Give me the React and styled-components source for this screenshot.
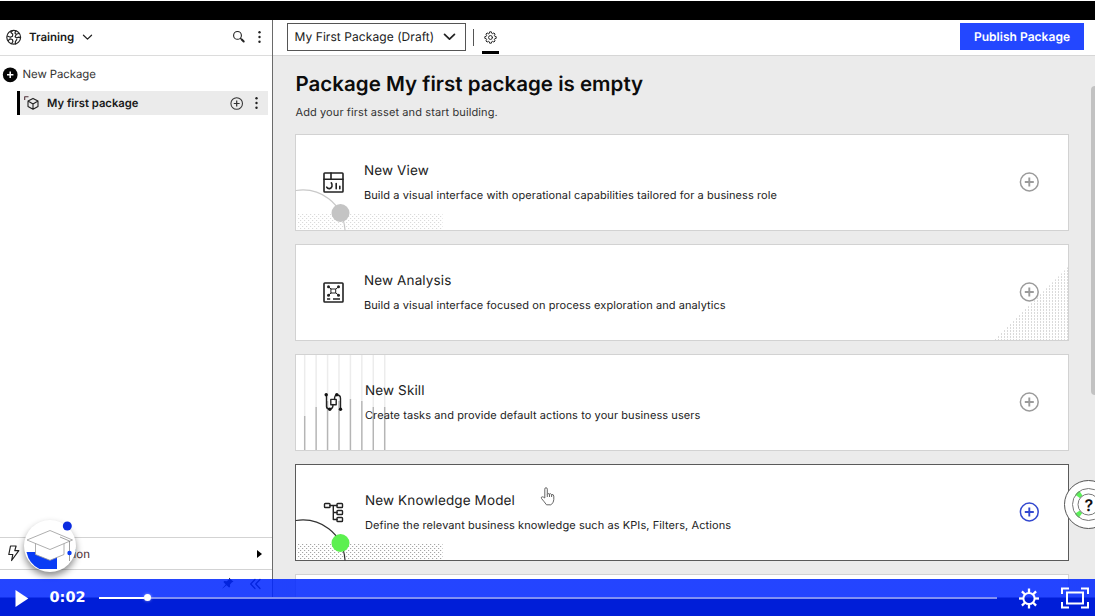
import React from "react";
import styled, { createGlobalStyle } from "styled-components";

const Global = createGlobalStyle`
  * { box-sizing: border-box; }
  body { margin: 0; background: #fff; overflow: hidden; }
  svg { display: block; flex: none; overflow: visible; }
`;

const Frame = styled.div`
  position: relative;
  width: 1095px;
  height: 616px;
  overflow: hidden;
  display: flex;
  flex-direction: column;
  background: #fff;
  color: #1a1a1a;
  font-family: Inter, "Liberation Sans", sans-serif;
  text-rendering: geometricPrecision;
`;
const Letterbox = styled.div`
  height: 19px;
  margin-top: 1px;
  background: #000;
  flex: none;
`;
const Body = styled.div`
  display: flex;
  flex: 1;
  min-height: 0;
`;
const Sidebar = styled.aside`
  width: 273px;
  flex: none;
  border-right: 1px solid #6a6a6a;
  display: flex;
  flex-direction: column;
`;
const SideHeader = styled.header`
  height: 36px;
  padding: 0 8px 1px 6px;
  border-bottom: 1px solid #dcdcdc;
  display: flex;
  align-items: center;
`;
const Label = styled.span`
  font-size: ${(p) => p.$size || 12}px;
  font-weight: ${(p) => p.$weight || 400};
  letter-spacing: ${(p) => p.$track || 0}px;
  color: ${(p) => p.$color || "#1a1a1a"};
  margin-left: ${(p) => p.$gap || 0}px;
  line-height: 16px;
  white-space: nowrap;
`;
const Spacer = styled.div`
  flex: ${(p) => (p.$width ? `0 0 ${p.$width}px` : "1")};
`;
const NewPackage = styled.div`
  height: 36px;
  padding: 0 0 0 3px;
  display: flex;
  align-items: center;
  gap: 4.5px;
`;
const PackageRow = styled.div`
  height: 24px;
  margin: -1px 4px 0 17px;
  padding: 0 7px 0 4px;
  border-left: 3px solid #000;
  background: #ebebeb;
  display: flex;
  align-items: center;
`;
const AutomationRow = styled.div`
  height: 33px;
  margin-top: auto;
  padding: 0 10px 0 7px;
  border: solid #d3d3d3;
  border-width: 1px 0;
  display: flex;
  align-items: center;
`;
const SideFooter = styled.div`
  height: 46px;
  padding: 7px 11px 0;
  display: flex;
  justify-content: flex-end;
  gap: 16px;
`;
const Main = styled.main`
  flex: 1;
  display: flex;
  flex-direction: column;
  background: #ebebeb;
`;
const Toolbar = styled.header`
  height: 36px;
  flex: none;
  padding: 3px 11px 0 14px;
  background: #fff;
  border-bottom: 1px solid #d6d6d6;
  display: flex;
  align-items: flex-start;
`;
const Select = styled.div`
  width: 179px;
  height: 28px;
  border: 1px solid #555;
  padding: 0 10px 0 6.5px;
  display: flex;
  align-items: center;
  justify-content: space-between;
`;
const Divider = styled.div`
  width: 1px;
  height: 17px;
  margin: 6px 8px 0 7px;
  background: #555;
`;
const SettingsTab = styled.div`
  width: 17px;
  height: 31px;
  padding: 8px 0 0 2px;
  border-bottom: 3px solid #000;
`;
const Publish = styled.button`
  width: 124px;
  height: 27px;
  border: 0;
  padding: 0;
  background: #2347ff;
  color: #fff;
  font: 600 12px/28px Inter, sans-serif;
  text-rendering: inherit;
  letter-spacing: 0.03px;
`;
const Content = styled.section`
  flex: 1;
  min-height: 0;
  overflow: hidden;
  display: flex;
  justify-content: space-between;
`;
const Column = styled.div`
  width: 796px;
  padding: 14px 0 0 22px;
`;
const Title = styled.h1`
  margin: 0 0 0 0.5px;
  font-size: 20.5px;
  line-height: 27px;
  font-weight: 600;
  letter-spacing: 0.02px;
  color: #0c0c0c;
`;
const Subtitle = styled.p`
  margin: 7px 0 14px 0.5px;
  font-size: 11px;
  line-height: 16px;
  letter-spacing: 0.1px;
  color: #333;
`;
const CardList = styled.div`
  display: flex;
  flex-direction: column;
  gap: 13px;
`;
const Card = styled.article`
  position: relative;
  width: 774px;
  height: 97px;
  background: #fff;
  border: 1px solid ${(p) => (p.$active ? "#5a5a5a" : "#d2d2d2")};
  padding: 0 29px 1px 27px;
  display: flex;
  align-items: center;
`;
const Ornament = styled.svg`
  position: absolute;
  left: 0;
  bottom: 0;
`;
const CardText = styled.div`
  position: relative;
  display: flex;
  flex-direction: column;
  gap: 8px;
  flex: 1;
  padding-top: 2px;
  margin-left: ${(p) => p.$indent}px;
`;
const CardTitle = styled.h2`
  margin: 0;
  font-size: 13.5px;
  line-height: 17px;
  font-weight: 400;
  letter-spacing: 0.12px;
  color: #222;
`;
const CardDesc = styled.p`
  margin: 0;
  font-size: 11px;
  line-height: 15px;
  letter-spacing: 0.08px;
  color: #222;
`;
const Scrollbar = styled.div`
  width: 4px;
  height: 309px;
  margin-top: 30px;
  background: #c2c2c2;
  border-radius: 4px 0 0 4px;
`;
const Player = styled.div`
  position: absolute;
  left: 0;
  top: 579px;
  width: 1095px;
  height: 37px;
  padding: 0 6px 0 15px;
  display: flex;
  align-items: center;
  background: linear-gradient(rgba(0, 38, 255, 0.86) 0 18px, rgba(0, 30, 216, 1) 19px);
`;
const Time = styled.span`
  width: 36px;
  margin: 2px 13px 0 20.5px;
  color: #fff;
  font: 700 14.5px/19px "DejaVu Sans", sans-serif;
  white-space: nowrap;
`;
const Track = styled.div`
  width: 898px;
  height: 2px;
  display: flex;
  align-items: center;
  background: #8291f2;
`;
const Played = styled.div`
  width: 45px;
  height: 2px;
  background: #fff;
`;
const Knob = styled.div`
  width: 7px;
  height: 7px;
  border-radius: 50%;
  background: #fff;
  box-shadow: 0 0 3px #fff8;
`;
const Controls = styled.div`
  display: flex;
  gap: 21px;
`;
const Academy = styled.div`
  position: absolute;
  left: 24px;
  top: 520px;
  width: 52px;
  height: 52px;
  border-radius: 50%;
  background: #fff;
  box-shadow: 0 4px 7px rgba(0, 0, 0, 0.45);
`;
const Help = styled.div`
  position: absolute;
  left: 1064px;
  top: 480px;
`;
const Cursor = styled.svg`
  position: absolute;
  left: 540px;
  top: 487px;
`;
const IconSlot = styled.div`
  position: relative;
`;

const stroke = (w = 1.2, color = "#222") => ({
  fill: "none",
  stroke: color,
  strokeWidth: w,
  strokeLinecap: "round",
  strokeLinejoin: "round",
});

const Globe = () => (
  <svg width="16" height="16" viewBox="0 0 16 16" {...stroke(1.2)}>
    <circle cx="7.7" cy="8.3" r="6.9" strokeWidth="1.2" />
    <path d="M6.300 1.900 4.900 3.600 6.700 5 6.500 7.200 4.400 8.300 1.300 7M2.300 11.500l1.700-1.600 2.400.6.500 2-1.200 2M9.700 2 8.900 4.100l1.300 1.300-1.100 2.300 1.400 1.200 2.400-.8 1.500.6M9.500 15l-.2-2.200 1.400-2.200M10.300 5.300l2.300-.8" />
  </svg>
);
const Chevron = ({ w = 9, weight = 1.4 }) => (
  <svg width={w} height={w / 2} viewBox="0 0 10 5" {...stroke(weight)}>
    <path d="M.5.3 5 4.6 9.5.3" />
  </svg>
);
const Magnifier = () => (
  <svg width="13" height="12" viewBox="0 0 13 12" {...stroke(1.1)}>
    <circle cx="5.5" cy="4.4" r="3.9" />
    <path d="m8.500 7.3 1.400 1.3" />
    <path d="m9.700 8.5 2 2" strokeWidth="2" />
  </svg>
);
const Dots = () => (
  <svg width="3" height="12" viewBox="0 0 3 12" fill="#222">
    <circle cx="1.5" cy="1.3" r="1.2" />
    <circle cx="1.5" cy="6" r="1.2" />
    <circle cx="1.5" cy="10.7" r="1.2" />
  </svg>
);
const PlusDisc = () => (
  <svg width="15" height="15" viewBox="0 0 15 15">
    <circle cx="7.2" cy="7.8" r="7.4" fill="#050505" />
    <path d="M7.200 4.600v6.400M4 7.800h6.400" stroke="#fff" strokeWidth="1.5" />
  </svg>
);
const PlusRing = ({ size = 20, color = "#9b9b9b", weight = 1.5 }) => (
  <svg width={size} height={size} viewBox="0 0 20 20" {...stroke(weight, color)}>
    <circle cx="10.3" cy="10" r="8.9" />
    <path d="M10.300 5.500v9M5.800 10h9" strokeWidth="1.9" strokeLinecap="butt" />
  </svg>
);
const Cube = () => (
  <svg width="16" height="16" viewBox="0 0 16 16" {...stroke(1.1)}>
    <path d="M.7 5V1.700h3.800" stroke="#503038" strokeLinecap="butt" />
    <path d="m9 3.400 5 2.700v5.300l-5 2.900-5-2.900V6.100zM4 6.100l5 2.800 5-2.800M9 8.900v5.400" />
  </svg>
);
const GearOutline = () => (
  <svg width="13" height="13" viewBox="0 0 24 24" {...stroke(1.8)}>
    <circle cx="12" cy="12" r="3.6" />
    <path d="m9.7 4.2.7-2.7h3.2l.7 2.7 1.6.7L18.3 3.500l2.2 2.200-1.400 2.400.7 1.600 2.700.7v3.200l-2.700.7-.7 1.600 1.400 2.400-2.200 2.200-2.400-1.400-1.600.7-.7 2.700h-3.200l-.7-2.700-1.600-.7-2.400 1.400-2.200-2.200 1.400-2.400-.7-1.600-2.700-.7v-3.200l2.700-.7.7-1.600-1.400-2.400 2.200-2.200 2.400 1.400z" />
  </svg>
);
const Bolt = () => (
  <svg width="13" height="17" viewBox="0 0 13 17" {...stroke(1.2)}>
    <path d="M3.500 1h5.600L7.800 5.700h4L4.600 15.500 5.800 9.500H1.800z" />
  </svg>
);
const Pin = () => (
  <svg width="12" height="12" viewBox="0 0 12 12" fill="#111">
    <path d="m7 .8 4.500 4-1.500.4-2 2.200.1 2.500-1.100.6-2.500-2.300L.7 11.500l-.3-.3 3.300-3.700L1.400 5l.9-.9 2.500.1L7 2.300z" />
  </svg>
);
const Collapse = () => (
  <svg width="11" height="12" viewBox="0 0 11 12" {...stroke(1.2, "#111")}>
    <path d="M5 2.500.7 7 5 11.500M10 2.500 5.700 7 10 11.500" />
  </svg>
);

const ViewIcon = () => (
  <svg width="21" height="21" viewBox="0 0 21 21" {...stroke(1.6)}>
    <rect x="1" y="1" width="19" height="19" rx=".8" />
    <path d="M1 7.300h19M8 1v6.300" />
    <path d="M8.300 10.800c1.700 2.500.6 5.300-1.600 5.800-1.300.2-2.400-.3-3-1.500M13.200 11.500v5.200M16.800 14.200v2.500" />
  </svg>
);
const AnalysisIcon = () => (
  <svg width="21" height="21" viewBox="0 0 21 21" {...stroke(1.6)}>
    <rect x="1" y="1" width="19" height="19" rx=".8" />
    <path d="m5.500 4.800 10 8.400M15.500 4.800l-10 8.400" strokeWidth="1" />
    <g fill="#222" stroke="none">
      <circle cx="5.5" cy="4.8" r="1.5" />
      <circle cx="15.5" cy="4.8" r="1.5" />
      <circle cx="5.5" cy="13.2" r="1.5" />
      <circle cx="15.5" cy="13.2" r="1.5" />
    </g>
    <rect x="8.3" y="7" width="4.4" height="4" fill="#fff" strokeWidth="1" />
    <path d="M4 17h3.200M10 17h7" strokeWidth="1.3" strokeLinecap="butt" />
  </svg>
);
const SkillIcon = () => (
  <svg width="21" height="21" viewBox="0 0 21 21" {...stroke(1.4)}>
    <path d="M3.500 3v11.500q0 2.500 3.500 2.500M7 17q3 0 3-4.500M11.500 7.500Q11.500 2.800 14 3q3.500 0 3.500 3.500V17" />
    <rect x="7.8" y="7.4" width="5.4" height="5.4" />
    <g fill="#111" stroke="none">
      <circle cx="3.2" cy="2.8" r="1.7" />
      <circle cx="13.8" cy="2.8" r="1.7" />
      <circle cx="6.8" cy="17.2" r="1.7" />
      <circle cx="17.5" cy="17.2" r="1.7" />
    </g>
  </svg>
);
const ModelIcon = () => (
  <svg width="21" height="21" viewBox="0 0 21 21" {...stroke(1.4)}>
    <rect x="1.5" y="1.5" width="5.5" height="4" rx=".8" />
    <rect x="14" y="1.5" width="5.5" height="4" rx=".8" />
    <rect x="14" y="8.5" width="5.5" height="4" rx=".8" />
    <rect x="14" y="15.5" width="5.5" height="4" rx=".8" />
    <path d="M7 3.500h7M10.300 3.500v14H14M10.300 10.500H14" />
  </svg>
);

const ArcOrnament = ({ id, line, dot, grain }) => (
  <Ornament width="160" height="94">
    <defs>
      <pattern id={id} width="4" height="4" patternUnits="userSpaceOnUse">
        <path d="M0 .5h1.200M2 2.500h1.200" stroke={grain} />
      </pattern>
    </defs>
    <rect x="1" y="78" width="145.5" height="16" fill={`url(#${id})`} />
    <path d="M0 54.500C24 51 47 67 49 94" {...stroke(1.2, line)} />
    <circle cx="44.5" cy="77" r="9" fill={dot} />
  </Ornament>
);
const TriangleOrnament = () => (
  <Ornament width="772" height="94">
    <defs>
      <pattern id="tri" width="3" height="3" patternUnits="userSpaceOnUse">
        <path d="M.5 0v2" stroke="#dadada" />
      </pattern>
    </defs>
    <path d="M772 21v73h-74z" fill="url(#tri)" />
  </Ornament>
);
const LinesOrnament = () => (
  <Ornament width="100" height="95" viewBox="0 -1 100 95">
    {[60, 51, 45, 45, 43, 45, 51, 51].map((y, i) => (
      <g key={i} strokeWidth="1.5">
        <path d={`M${8.7 + i * 11.43} -1V${y}`} stroke="#ececec" />
        <path d={`M${8.7 + i * 11.43} ${y}V94`} stroke="#b5b5b5" />
      </g>
    ))}
  </Ornament>
);

const assets = [
  {
    title: "New View",
    text: "Build a visual interface with operational capabilities tailored for a business role",
    icon: <ViewIcon />,
    art: <ArcOrnament id="grainView" line="#c9c9c9" dot="#c4c4c4" grain="#dadada" />,
    indent: 20,
  },
  {
    title: "New Analysis",
    text: "Build a visual interface focused on process exploration and analytics",
    icon: <AnalysisIcon />,
    art: <TriangleOrnament />,
    indent: 20,
  },
  {
    title: "New Skill",
    text: "Create tasks and provide default actions to your business users",
    icon: <SkillIcon />,
    art: <LinesOrnament />,
    indent: 21,
  },
  {
    title: "New Knowledge Model",
    text: "Define the relevant business knowledge such as KPIs, Filters, Actions",
    icon: <ModelIcon />,
    art: <ArcOrnament id="grainModel" line="#333" dot="#5cf04f" grain="#a5a5a5" />,
    indent: 21,
    active: true,
  },
];

export default function App() {
  return (
    <Frame>
      <Global />
      <Letterbox />
      <Body>
        <Sidebar>
          <SideHeader>
            <Globe />
            <Label $size={11.5} $weight={600} $gap={7}>Training</Label>
            <Spacer $width={9} />
            <Chevron w={9} />
            <Spacer />
            <Magnifier />
            <Spacer $width={13} />
            <Dots />
            <Spacer $width={3} />
          </SideHeader>
          <NewPackage>
            <PlusDisc />
            <Label $size={11.4} $track={-0.07} $color="#333">New Package</Label>
          </NewPackage>
          <PackageRow>
            <Cube />
            <Label $size={11.25} $weight={600} $gap={7}>My first package</Label>
            <Spacer />
            <PlusRing size={13} color="#333" weight={1.6} />
            <Spacer $width={12} />
            <Dots />
            <Spacer $width={3} />
          </PackageRow>
          <AutomationRow>
            <Bolt />
            <Label $size={11.5} $color="#4a2c33" $gap={8}>Automation</Label>
            <Spacer />
            <svg width="5" height="8" viewBox="0 0 5 8"><path d="M0 0 5 4 0 8z" fill="#000" /></svg>
          </AutomationRow>
          <SideFooter>
            <Pin />
            <Collapse />
          </SideFooter>
        </Sidebar>
        <Main>
          <Toolbar>
            <Select>
              <Label $size={12} $track={0.07}>My First Package (Draft)</Label>
              <Chevron w={11} weight={1.6} />
            </Select>
            <Divider />
            <SettingsTab><GearOutline /></SettingsTab>
            <Spacer />
            <Publish>Publish Package</Publish>
          </Toolbar>
          <Content>
            <Column>
              <Title>Package My first package is empty</Title>
              <Subtitle>Add your first asset and start building.</Subtitle>
              <CardList>
                {assets.map((a) => (
                  <Card key={a.title} $active={a.active}>
                    {a.art}
                    <IconSlot>{a.icon}</IconSlot>
                    <CardText $indent={a.indent}>
                      <CardTitle>{a.title}</CardTitle>
                      <CardDesc>{a.text}</CardDesc>
                    </CardText>
                    <PlusRing color={a.active ? "#3348cf" : "#9b9b9b"} />
                  </Card>
                ))}
                <Card />
              </CardList>
            </Column>
            <Scrollbar />
          </Content>
        </Main>
      </Body>

      <Cursor width="16" height="20" viewBox="0 0 16 20">
        <path
          d="M4.800 11V2.200q0-1.500 1.200-1.500t1.300 1.500V7.500q.5-1.500 2.100-.5 1.500-.8 2.200.6 2-.6 2.200 1.500v3.500q0 3.500-3 5.200H6.500Q4.500 15 1.500 11.500q-.8-1.600.8-1.700Q3.600 10 4.800 11zM7.300 7.500V10M9.500 7.200V10M11.600 7.800V10"
          fill="#fff" stroke="#555" strokeWidth=".9" strokeLinejoin="round"
        />
      </Cursor>

      <Academy>
        <svg width="52" height="52" viewBox="0 0 52 52">
          <path d="M2.500 32H33V49H15.500Q5 44 2.500 32z" fill="#0a3cf5" />
          <path d="M11.500 20v14.500L26 40.300 40 34.500V20z" fill="#fff" stroke="#999" strokeWidth=".8" />
          <path d="M26 10.500 48.500 20 26 29.500 3 20z" fill="#fff" stroke="#999" strokeWidth=".8" />
          <path d="m36 17 9.500 4v20" fill="none" stroke="#777" strokeWidth=".7" />
          <circle cx="43.3" cy="6" r="4.5" fill="#0a2be0" />
          <circle cx="45.5" cy="33" r="2.2" fill="#0a3cf5" />
        </svg>
      </Academy>

      <Help>
        <svg width="50" height="50" viewBox="0 0 50 50">
          <circle cx="24.5" cy="24.5" r="24" fill="#fff" stroke="#555" />
          <circle cx="24.5" cy="24.5" r="13.5" fill="none" stroke="#5df05a" strokeWidth="6" strokeDasharray="4.5 16.7" strokeDashoffset="-8.35" />
          <circle cx="24.5" cy="24.5" r="16" fill="none" stroke="#777" />
          <circle cx="24.5" cy="24.5" r="10.5" fill="#fff" stroke="#777" />
          <text x="24.8" y="30.5" textAnchor="middle" fontFamily="Inter, sans-serif" fontWeight="600" fontSize="16" fill="#111">?</text>
        </svg>
      </Help>

      <Player>
        <svg width="14" height="18" viewBox="0 0 14 18"><path d="M.5 1 13.300 9.500 .5 18z" fill="#fff" /></svg>
        <Time>0:02</Time>
        <Track>
          <Played />
          <Knob />
        </Track>
        <Spacer />
        <Controls>
          <svg width="22" height="22" viewBox="0 0 22 22" fill="none" stroke="#fff" strokeWidth="2">
            <circle cx="11" cy="11.5" r="5.6" />
            {[0, 45, 90, 135, 180, 225, 270, 315].map((r) => (
              <path key={r} d="M11 5.900V1.500" transform={`rotate(${r} 11 11.5)`} strokeWidth="2.3" />
            ))}
          </svg>
          <svg width="28" height="22" viewBox="0 0 28 22" fill="none" stroke="#fff" strokeWidth="2">
            <rect x="6" y="5.5" width="16" height="11" />
            <path d="M1 7V1.500h7M20 1.500h7V7M27 15v5.500h-7M8 20.500H1V15" />
          </svg>
        </Controls>
      </Player>
    </Frame>
  );
}
